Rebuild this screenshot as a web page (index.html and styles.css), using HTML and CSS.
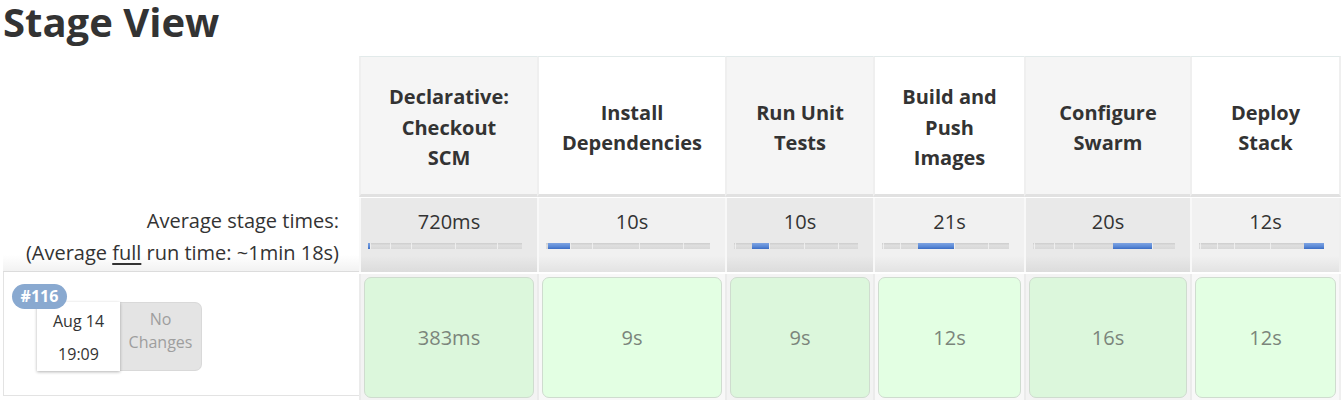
FILE: index.html
```html
<!DOCTYPE html>
<html>
<head>
<meta charset="utf-8">
<link rel="stylesheet" href="styles.css">
</head>
<body>
<h2 class="title">Stage View</h2>
<div class="stage-view">
  <div class="col label-col">
    <div class="cell head-blank"></div>
    <div class="cell avg-label">
      <div>Average stage times:</div>
      <div>(Average <span class="u">full</span> run time: ~1min 18s)</div>
    </div>
    <div class="cell build-label">
      <span class="badge">#116</span>
      <div class="build-card">
        <div class="date"><div>Aug 14</div><div>19:09</div></div>
        <div class="changes">No<br>Changes</div>
      </div>
    </div>
  </div>

  <div class="col stage odd w1">
    <div class="cell head"><span>Declarative: Checkout SCM</span></div>
    <div class="cell avg"><div class="avg-time">720ms</div>
      <div class="bar"><i class="on" style="width:0.98%"></i><i style="width:13.56%"></i><i style="width:13.56%"></i><i style="width:28.5%"></i><i style="width:27.1%"></i><i style="width:16.3%"></i></div>
    </div>
    <div class="cell run"><div class="box">383ms</div></div>
  </div>

  <div class="col stage even w2">
    <div class="cell head"><span>Install Dependencies</span></div>
    <div class="cell avg"><div class="avg-time">10s</div>
      <div class="bar"><i style="width:0.98%"></i><i class="on" style="width:13.56%"></i><i style="width:13.56%"></i><i style="width:28.5%"></i><i style="width:27.1%"></i><i style="width:16.3%"></i></div>
    </div>
    <div class="cell run"><div class="box">9s</div></div>
  </div>

  <div class="col stage odd w3">
    <div class="cell head"><span>Run Unit Tests</span></div>
    <div class="cell avg"><div class="avg-time">10s</div>
      <div class="bar"><i style="width:0.98%"></i><i style="width:13.56%"></i><i class="on" style="width:13.56%"></i><i style="width:28.5%"></i><i style="width:27.1%"></i><i style="width:16.3%"></i></div>
    </div>
    <div class="cell run"><div class="box">9s</div></div>
  </div>

  <div class="col stage even w4">
    <div class="cell head"><span>Build and Push Images</span></div>
    <div class="cell avg"><div class="avg-time">21s</div>
      <div class="bar"><i style="width:0.98%"></i><i style="width:13.56%"></i><i style="width:13.56%"></i><i class="on" style="width:28.5%"></i><i style="width:27.1%"></i><i style="width:16.3%"></i></div>
    </div>
    <div class="cell run"><div class="box">12s</div></div>
  </div>

  <div class="col stage odd w5">
    <div class="cell head"><span>Configure Swarm</span></div>
    <div class="cell avg"><div class="avg-time">20s</div>
      <div class="bar"><i style="width:0.98%"></i><i style="width:13.56%"></i><i style="width:13.56%"></i><i style="width:28.5%"></i><i class="on" style="width:27.1%"></i><i style="width:16.3%"></i></div>
    </div>
    <div class="cell run"><div class="box">16s</div></div>
  </div>

  <div class="col stage even w6">
    <div class="cell head"><span>Deploy Stack</span></div>
    <div class="cell avg"><div class="avg-time">12s</div>
      <div class="bar"><i style="width:0.98%"></i><i style="width:13.56%"></i><i style="width:13.56%"></i><i style="width:28.5%"></i><i style="width:27.1%"></i><i class="on" style="width:16.3%"></i></div>
    </div>
    <div class="cell run"><div class="box">12s</div></div>
  </div>
</div>
</body>
</html>
```

FILE: styles.css
```css
html, body {
  margin: 0;
  padding: 0;
  background: #fff;
}
body {
  font-family: "Segoe UI", "Open Sans", "Noto Sans", sans-serif;
  color: #333;
  padding: 0 0 0 3px;
  overflow: hidden;
}
.title {
  margin: 0;
  height: 56px;
  font-size: 40px;
  font-weight: 700;
  line-height: 43px;
  letter-spacing: 0;
}
.stage-view {
  display: flex;
  align-items: flex-start;
}
.col {
  display: flex;
  flex-direction: column;
}
.label-col { width: 356px; }
.w1 { width: 178px; }
.w2 { width: 188px; }
.w3 { width: 148px; }
.w4 { width: 151px; }
.w5 { width: 166px; }
.w6 { width: 151px; }

/* label column */
.head-blank { height: 141px; }
.avg-label {
  height: 74px;
  margin-top: 1px;
  box-sizing: border-box;
  padding: 7px 20px 0 0;
  text-align: right;
  font-size: 20px;
  line-height: 32px;
  background: linear-gradient(#fff 0, #fff 78%, #f2f2f2 100%);
  border-bottom: 1px solid #dcdcdc;
}
.u { text-decoration: underline; text-underline-offset: 3px; }
.build-label {
  position: relative;
  height: 124px;
  border-left: 1px solid #e3e3e3;
  border-bottom: 1px solid #e3e3e3;
  box-sizing: border-box;
  padding: 30px 0 0 33px;
}
.badge {
  position: absolute;
  left: 8px;
  top: 12px;
  width: 55px;
  height: 25px;
  border-radius: 13px;
  background: #89a9d0;
  color: #fff;
  font-weight: 700;
  font-size: 16px;
  line-height: 25px;
  text-align: center;
  z-index: 2;
}
.build-card {
  display: flex;
  height: 69px;
}
.date {
  width: 83px;
  background: #fff;
  box-shadow: 0 1px 3px rgba(0,0,0,0.3);
  text-align: center;
  font-size: 16px;
  line-height: 33px;
  padding-top: 3px;
  box-sizing: border-box;
  position: relative;
  z-index: 1;
}
.changes {
  width: 82px;
  background: #e4e4e4;
  border: 1px solid #d9d9d9;
  border-left: none;
  border-radius: 0 7px 7px 0;
  box-sizing: border-box;
  color: #9e9e9e;
  font-size: 16px;
  line-height: 23px;
  text-align: center;
  padding-top: 5px;
}

/* stage columns */
.stage .cell { border-left: 2px solid #efefef; }
.head {
  box-sizing: content-box;
  border-top: 1px solid #e2eaea;
  border-bottom: 3px solid #e1e1e1;
  display: flex;
  align-items: center;
  justify-content: center;
  text-align: center;
  font-weight: 700;
  font-size: 20px;
  line-height: 30.5px;
  padding: 5px 22px 0;
  height: 132px;
}
.odd .head { background: #f5f5f5; }
.even .head { background: #fff; }
.stage:last-child .cell { border-right: 2px solid #efefef; }

.avg {
  height: 74px;
  margin-top: 1px;
  box-sizing: border-box;
  padding: 10px 15px 0 7px;
  text-align: center;
  border-left-color: #f8f8f8 !important;
}
.odd .avg { background: linear-gradient(#e9e9e9 0, #e9e9e9 78%, #dcdcdc 100%); }
.even .avg { background: linear-gradient(#f1f1f1 0, #f1f1f1 78%, #e3e3e3 100%); }
.avg-time {
  font-size: 20px;
  line-height: 28px;
  margin-left: 8px;
}
.bar {
  display: flex;
  margin-top: 7px;
  height: 6px;
  background: linear-gradient(#cdcdcd, #dedede 40%, #d8d8d8);
}
.bar i {
  display: block;
  height: 100%;
  border-left: 1px solid rgba(255,255,255,0.55);
  box-sizing: border-box;
}
.bar i:first-child { border-left: none; }
.bar i.on {
  background: linear-gradient(#7ea3e2, #5a89d6 60%, #3b6cc4);
  border-left: none;
}

.run {
  margin-top: 2px;
  height: 126px;
  box-sizing: border-box;
  padding: 3px 3px 2px 3px;
  border-left-color: #ebebeb !important;
}
.odd .run { background: #f3f3f3; }
.even .run { background: #f8f8f8; }
.box {
  height: 100%;
  box-sizing: border-box;
  border: 1px solid #cfdccf;
  border-radius: 7px;
  display: flex;
  align-items: center;
  justify-content: center;
  font-size: 20px;
  color: #7b857b;
}
.odd .box { background: #dcf7dc; }
.even .box { background: #e3ffe3; }
```
